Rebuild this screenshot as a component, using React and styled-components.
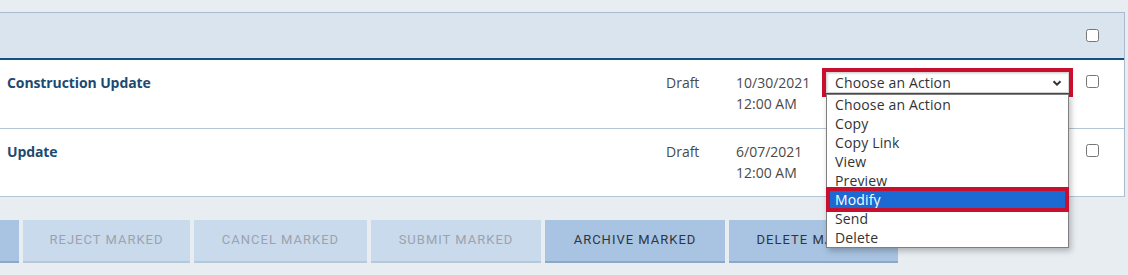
import React from "react";
import styled, { createGlobalStyle } from "styled-components";

const Global = createGlobalStyle`
  html, body { margin: 0; padding: 0; background: #e8edf2; }
  body { font-family: "Open Sans", "Liberation Sans", sans-serif; overflow: hidden; }
`;

const Page = styled.div`
  width: 1128px;
  height: 275px;
  padding-top: 12px;
  box-sizing: border-box;
  overflow: hidden;
`;

const Table = styled.div`
  width: 1125px;
  background: #fff;
  border-top: 1px solid #aabbcf;
  border-right: 1px solid #aabbcf;
  box-sizing: border-box;
`;

const Row = styled.div`
  display: grid;
  grid-template-columns: 666px 70px 90px 243px 13px 42px;
  align-items: start;
  box-sizing: border-box;
  height: ${(p) => p.$h}px;
  background: ${(p) => (p.$head ? "#dae4ef" : "#fff")};
  border-bottom: ${(p) => (p.$head ? "2px solid #0f5283" : "1px solid #b4c5d6")};
  padding-top: ${(p) => (p.$head ? 13 : 12)}px;
`;

const Title = styled.div`
  padding-left: 7px;
  font-weight: 700;
  font-size: 14px;
  line-height: 21px;
  color: #1d4a70;
  letter-spacing: -0.1px;
`;

const Cell = styled.div`
  font-size: 14px;
  line-height: 21px;
  color: #4a4a4a;
`;

const CheckCell = styled.div`
  grid-column: 6;
  display: flex;
  input { margin: 3px 3px 3px 4px; width: 13px; height: 13px; }
`;

const ActionCell = styled.div`
  position: relative;
`;

const Select = styled.div`
  height: 21px;
  box-sizing: border-box;
  background: #fff;
  border: 1px solid #d6d6d6;
  outline: 4px solid #c8102e;
  display: flex;
  align-items: center;
  justify-content: space-between;
  padding: 0 6px 0 8px;
  font-size: 14px;
  letter-spacing: 0.15px;
  color: #333;
  box-shadow: inset 1px 1px 2px rgba(0, 0, 0, 0.12);
`;

const List = styled.div`
  position: absolute;
  top: 22px;
  left: 0;
  width: 243px;
  box-sizing: border-box;
  background: #fff;
  border: 1px solid #7f7f7f;
  box-shadow: 2px 3px 6px rgba(0, 0, 0, 0.25);
  z-index: 5;
`;

const Option = styled.div`
  position: relative;
  height: 19px;
  line-height: 19px;
  padding-left: 8px;
  font-size: 14px;
  letter-spacing: 0.15px;
  color: ${(p) => (p.$sel ? "#fff" : "#333")};
  background: ${(p) => (p.$sel ? "#1b69d2" : "transparent")};
  &::after {
    content: "";
    display: ${(p) => (p.$sel ? "block" : "none")};
    position: absolute;
    left: -1px;
    right: -1px;
    top: -3px;
    bottom: -3px;
    border: 4px solid #c8102e;
  }
`;

const Buttons = styled.div`
  display: flex;
  gap: 4px;
  margin-top: 23px;
`;

const Btn = styled.div`
  height: 43px;
  box-sizing: border-box;
  width: ${(p) => p.$w}px;
  flex: none;
  display: flex;
  align-items: center;
  justify-content: center;
  padding-bottom: 2px;
  font-family: Roboto, "Liberation Sans", sans-serif;
  font-size: 13px;
  letter-spacing: 1px;
  background: ${(p) => (p.$on ? "#a8c4e2" : "#c9daec")};
  border-bottom: 2px solid ${(p) => (p.$on ? "#8ea8c4" : "#b7c8da")};
  color: ${(p) => (p.$on ? "#2f3540" : "#9ba3ad")};
`;

const Chevron = () => (
  <svg width="10" height="8" viewBox="0 0 10 8">
    <path d="M1.5 2.2 L5 5.6 L8.5 2.2" fill="none" stroke="#333" strokeWidth="2" />
  </svg>
);

const options = ["Choose an Action", "Copy", "Copy Link", "View", "Preview", "Modify", "Send", "Delete"];

export default function App() {
  return (
    <Page>
      <Global />
      <Table>
        <Row $head $h={47}>
          <CheckCell>
            <input type="checkbox" />
          </CheckCell>
        </Row>
        <Row $h={69}>
          <Title>Construction Update</Title>
          <Cell>Draft</Cell>
          <Cell>
            10/30/2021
            <br />
            12:00 AM
          </Cell>
          <ActionCell>
            <Select>
              <span>Choose an Action</span>
              <Chevron />
            </Select>
            <List>
              {options.map((o) => (
                <Option key={o} $sel={o === "Modify"}>
                  {o}
                </Option>
              ))}
            </List>
          </ActionCell>
          <CheckCell>
            <input type="checkbox" />
          </CheckCell>
        </Row>
        <Row $h={68}>
          <Title>Update</Title>
          <Cell>Draft</Cell>
          <Cell>
            6/07/2021
            <br />
            12:00 AM
          </Cell>
          <div />
          <CheckCell>
            <input type="checkbox" />
          </CheckCell>
        </Row>
      </Table>
      <Buttons>
        <Btn $on $w={19} />
        <Btn $w={167}>REJECT MARKED</Btn>
        <Btn $w={173}>CANCEL MARKED</Btn>
        <Btn $w={170}>SUBMIT MARKED</Btn>
        <Btn $on $w={180}>ARCHIVE MARKED</Btn>
        <Btn $on $w={169}>DELETE MARKED</Btn>
      </Buttons>
    </Page>
  );
}
